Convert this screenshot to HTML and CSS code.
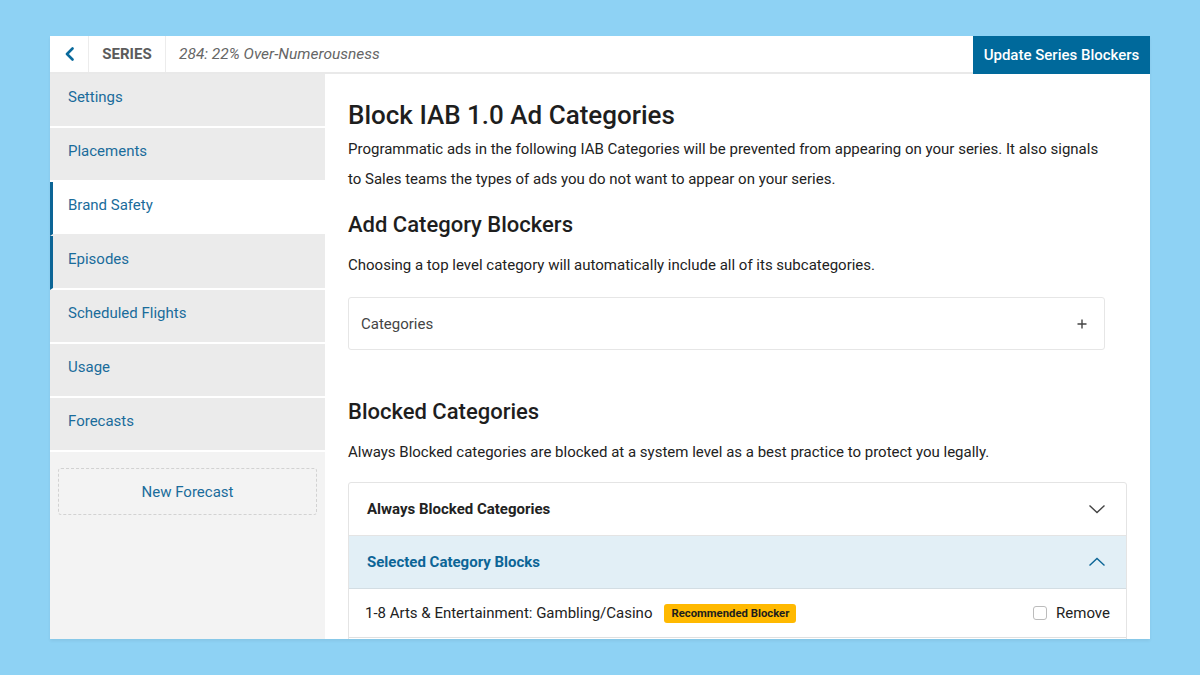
FILE: index.html
```html
<!DOCTYPE html>
<html>
<head>
<meta charset="utf-8">
<link rel="stylesheet" href="styles.css">
</head>
<body>
<div class="app">
  <header class="topbar">
    <div class="back">
      <svg width="12" height="14" viewBox="0 0 12 14"><path d="M8.5 1.5 L3 7 L8.5 12.5" fill="none" stroke="#0a6a9c" stroke-width="2.6" stroke-linecap="round" stroke-linejoin="round"/></svg>
    </div>
    <div class="crumb">SERIES</div>
    <div class="title">284: 22% Over-Numerousness</div>
    <button class="update">Update Series Blockers</button>
  </header>
  <div class="body">
    <nav class="sidebar">
      <div class="nav-item">Settings</div>
      <div class="nav-item">Placements</div>
      <div class="nav-item active">Brand Safety</div>
      <div class="nav-item marked">Episodes</div>
      <div class="nav-item">Scheduled Flights</div>
      <div class="nav-item">Usage</div>
      <div class="nav-item">Forecasts</div>
      <div class="new-forecast">New Forecast</div>
    </nav>
    <main class="main">
      <h1>Block IAB 1.0 Ad Categories</h1>
      <p class="lead">Programmatic ads in the following IAB Categories will be prevented from appearing on your series. It also signals<br>to Sales teams the types of ads you do not want to appear on your series.</p>
      <h2 class="h-add">Add Category Blockers</h2>
      <p class="sub">Choosing a top level category will automatically include all of its subcategories.</p>
      <div class="cat-box">
        <span>Categories</span>
        <svg width="12" height="12" viewBox="0 0 12 12"><path d="M6 1.5 V10.5 M1.5 6 H10.5" stroke="#444" stroke-width="1.4"/></svg>
      </div>
      <h2 class="h-blocked">Blocked Categories</h2>
      <p class="sub">Always Blocked categories are blocked at a system level as a best practice to protect you legally.</p>
      <div class="accordion">
        <div class="acc-head">
          <span>Always Blocked Categories</span>
          <svg width="18" height="10" viewBox="0 0 18 10"><path d="M1.5 1.5 L9 8.5 L16.5 1.5" fill="none" stroke="#444" stroke-width="1.4"/></svg>
        </div>
        <div class="acc-head open">
          <span>Selected Category Blocks</span>
          <svg width="18" height="10" viewBox="0 0 18 10"><path d="M1.5 8.5 L9 1.5 L16.5 8.5" fill="none" stroke="#0c6596" stroke-width="1.4"/></svg>
        </div>
        <div class="acc-row">
          <span class="row-label">1-8 Arts &amp; Entertainment: Gambling/Casino</span>
          <span class="badge">Recommended Blocker</span>
          <label class="remove"><span class="check"></span>Remove</label>
        </div>
        <div class="acc-row"></div>
      </div>
    </main>
  </div>
</div>
</body>
</html>
```
FILE: styles.css
```css
* { box-sizing: border-box; }
html, body { margin: 0; padding: 0; }
body {
  background: #8ed2f4;
  font-family: Roboto, "Liberation Sans", Arial, sans-serif;
  color: #222;
  padding: 36px 0 0 50px;
  height: 675px;
  overflow: hidden;
}
.app {
  width: 1100px;
  height: 603px;
  background: #fff;
  overflow: hidden;
  display: flex;
  flex-direction: column;
  box-shadow: 0 2px 3px rgba(0,0,0,0.06);
}
.topbar {
  height: 38px;
  display: flex;
  align-items: stretch;
  border-bottom: 2px solid #e9e9e9;
  background: #fff;
  flex-shrink: 0;
}
.back {
  width: 39px;
  display: flex;
  align-items: center;
  justify-content: center;
  border-right: 1px solid #ececec;
  padding-left: 2px;
}
.crumb {
  width: 77px;
  display: flex;
  align-items: center;
  justify-content: center;
  font-weight: 700;
  font-size: 15px;
  color: #5b5b5b;
  border-right: 1px solid #ececec;
}
.title {
  flex: 1;
  display: flex;
  align-items: center;
  padding-left: 13px;
  font-style: italic;
  font-size: 15.5px;
  color: #666;
}
.update {
  width: 177px;
  margin-bottom: -2px;
  border: 0;
  background: #00699b;
  color: #fff;
  font-family: Roboto, "Liberation Sans", Arial, sans-serif;
  font-size: 15px;
  font-weight: 500;
  padding: 0;
}
.body {
  flex: 1;
  display: flex;
  min-height: 0;
}
.sidebar {
  width: 275px;
  background: #f3f3f3;
  flex-shrink: 0;
  display: flex;
  flex-direction: column;
}
.nav-item {
  height: 54px;
  border-bottom: 2px solid #fff;
  background: #ebebeb;
  color: #1a6c9b;
  font-size: 15px;
  padding: 14px 0 0 18px;
}
.nav-item.active { background: #fff; border-bottom-color: #ebebeb; }
.nav-item.active, .nav-item.marked {
  border-left: 3px solid #0c6596;
  padding-left: 15px;
}
.new-forecast {
  margin: 16px 8px 0 8px;
  height: 47px;
  border: 1px dashed #d2d2d2;
  border-radius: 3px;
  display: flex;
  align-items: center;
  justify-content: center;
  color: #1a6c9b;
  font-size: 15px;
}
.main {
  flex: 1;
  padding: 26px 23px 0 23px;
  min-width: 0;
}
h1 {
  margin: 0;
  font-size: 26px;
  line-height: 30px;
  font-weight: 500;
  color: #1e1e1e;
}
h2 {
  margin: 0;
  font-size: 22px;
  line-height: 26px;
  font-weight: 500;
  color: #1e1e1e;
}
.lead {
  margin: 4px 0 0 0;
  font-size: 15px;
  line-height: 30px;
}
.sub {
  margin: 12px 0 0 0;
  font-size: 15px;
  line-height: 30px;
}
.h-add { margin-top: 18px; }
.h-blocked { margin-top: 49px; }
.cat-box {
  margin-top: 17px;
  width: 757px;
  height: 53px;
  border: 1px solid #e6e6e6;
  border-radius: 3px;
  display: flex;
  align-items: center;
  justify-content: space-between;
  padding: 0 16px 0 12px;
  font-size: 15px;
  color: #444;
}
.accordion {
  margin-top: 15px;
  border: 1px solid #e4e4e4;
  border-radius: 3px;
}
.acc-head {
  height: 53px;
  display: flex;
  align-items: center;
  justify-content: space-between;
  padding: 0 20px 0 18px;
  font-size: 15px;
  font-weight: 700;
  color: #222;
  border-bottom: 1px solid #e4e4e4;
}
.acc-head.open {
  background: #e2eff6;
  color: #0c6596;
  border-bottom: 1px solid #d3dde3;
}
.acc-row {
  height: 49px;
  display: flex;
  align-items: center;
  padding: 0 16px 0 16px;
  font-size: 15px;
  color: #222;
  border-bottom: 1px solid #e0e0e0;
}
.row-label { margin-right: 12px; }
.badge {
  background: #ffb900;
  color: #1d1d1d;
  font-size: 11.3px;
  font-weight: 700;
  border-radius: 3px;
  padding: 3px 7px;
  line-height: 13px;
}
.remove {
  margin-left: auto;
  display: flex;
  align-items: center;
  font-size: 15px;
  color: #222;
}
.check {
  width: 14px;
  height: 14px;
  border: 1px solid #bcbcbc;
  border-radius: 3px;
  margin-right: 9px;
  background: #fff;
}
```
